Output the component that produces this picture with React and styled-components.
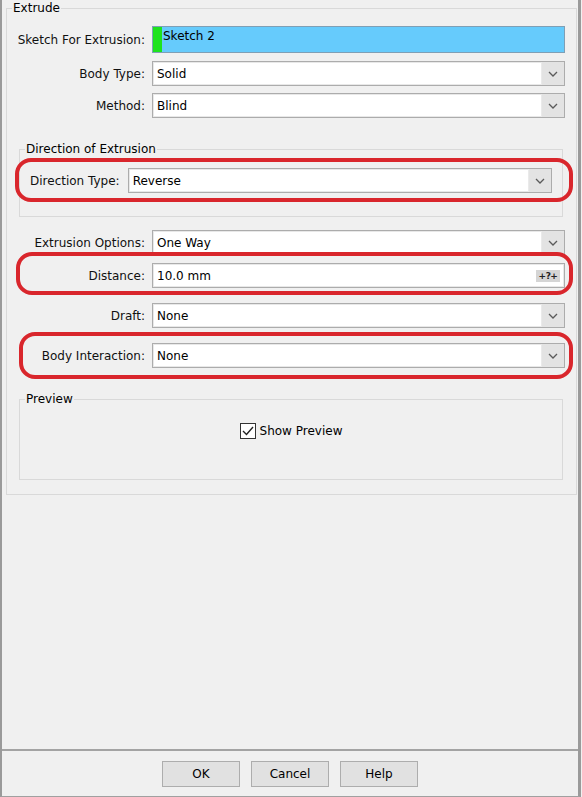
import React from "react";
import styled, { createGlobalStyle, css } from "styled-components";

const GlobalStyle = createGlobalStyle`
  html, body { margin: 0; padding: 0; background: #f0f0f0; }
  body {
    font-family: "DejaVu Sans", "Liberation Sans", sans-serif;
    font-size: 12px;
    color: #000;
  }
  * { box-sizing: border-box; }
`;

const Window = styled.div`
  width: 581px;
  height: 797px;
  display: flex;
  flex-direction: column;
  background: #f0f0f0;
  border-left: 2px solid #9a9a9a;
  border-right: 3px solid #9a9a9a;
  border-bottom: 1px solid #a0a0a0;
`;

const Body = styled.div`
  flex: 1;
  padding: 0 1px 0 4px;
`;

const Group = styled.fieldset`
  margin: ${(p) => p.$margin || "0"};
  padding: ${(p) => p.$padding};
  border: 1px solid #d9d9d9;
  min-width: 0;
`;

const Legend = styled.legend`
  padding: 0 1px;
  margin-left: -5px;
  line-height: 16px;
  font-size: 12px;
  color: #000;
`;

const Row = styled.div`
  position: relative;
  display: grid;
  grid-template-columns: ${(p) => (p.$inline ? "auto 1fr" : "128px 1fr")};
  column-gap: ${(p) => (p.$inline ? "8px" : "7px")};
  align-items: center;
  margin-top: ${(p) => p.$mt || 0}px;
  ${(p) =>
    p.$ring &&
    css`
      &::after {
        content: "";
        position: absolute;
        inset: ${p.$ring};
        border: 4px solid #d9262c;
        border-radius: 16px;
        pointer-events: none;
      }
    `}
`;

const Label = styled.label`
  text-align: right;
  white-space: nowrap;
  color: #111;
`;

const ComboBox = styled.div`
  height: 25px;
  display: flex;
  background: #fff;
  border: 1px solid #acacac;
  box-shadow: inset 0 0 0 1px #e8e8e8;
`;

const ComboText = styled.span`
  flex: 1;
  align-self: center;
  padding-left: 4px;
  white-space: nowrap;
`;

const ComboArrow = styled.span`
  width: 23px;
  display: flex;
  align-items: center;
  justify-content: center;
  background: #e3e3e3;
  border-left: 1px solid #eaeaea;
`;

const SketchField = styled.div`
  height: 27px;
  display: flex;
  align-items: flex-start;
  background: #66cbfc;
  border: 1px solid #7f9fb5;
`;

const GreenBar = styled.span`
  width: 9px;
  align-self: stretch;
  background: #1ee31e;
`;

const SketchText = styled.span`
  padding: 2px 0 0 1px;
  line-height: 15px;
`;

const TextBox = styled.div`
  height: 25px;
  display: flex;
  align-items: center;
  background: #fff;
  border: 1px solid #acacac;
  box-shadow: inset 0 0 0 1px #e8e8e8;
  padding-left: 4px;
`;

const SpinButton = styled.span`
  margin-left: auto;
  margin-right: 4px;
  width: 24px;
  height: 12px;
  background: #d5d5d5;
  font-size: 9px;
  font-weight: bold;
  line-height: 12px;
  text-align: center;
  letter-spacing: -0.5px;
  color: #222;
`;

const CheckRow = styled.div`
  display: flex;
  justify-content: center;
  align-items: center;
  gap: 4px;
`;

const CheckBox = styled.span`
  width: 16px;
  height: 16px;
  border: 1px solid #333;
  background: #fff;
  display: flex;
  align-items: center;
  justify-content: center;
`;

const Footer = styled.div`
  border-top: 2px solid #a3a3a3;
  padding: 10px 0 9px;
  display: flex;
  justify-content: center;
  gap: 11px;
`;

const Button = styled.button`
  width: 78px;
  height: 26px;
  background: #e1e1e1;
  border: 1px solid #adadad;
  font-family: inherit;
  font-size: 12px;
  color: #000;
  padding: 0;
`;

const Chevron = () => (
  <svg width="10" height="6" viewBox="0 0 10 6">
    <polyline points="1,1 5,5 9,1" fill="none" stroke="#5a5a5a" strokeWidth="1.3" />
  </svg>
);

const Combo = ({ value }) => (
  <ComboBox>
    <ComboText>{value}</ComboText>
    <ComboArrow>
      <Chevron />
    </ComboArrow>
  </ComboBox>
);

export default function App() {
  return (
    <>
      <GlobalStyle />
      <Window>
        <Body>
          <Group $padding="10px 11px 14px 10px">
            <Legend>Extrude</Legend>
            <Row>
              <Label>Sketch For Extrusion:</Label>
              <SketchField>
                <GreenBar />
                <SketchText>Sketch 2</SketchText>
              </SketchField>
            </Row>
            <Row $mt={8}>
              <Label>Body Type:</Label>
              <Combo value="Solid" />
            </Row>
            <Row $mt={7}>
              <Label>Method:</Label>
              <Combo value="Blind" />
            </Row>

            <Group $margin="23px 2px 0 2px" $padding="11px 10px 23px 10px">
              <Legend>Direction of Extrusion</Legend>
              <Row $inline $ring="-10px -21px -9px -15px">
                <Label>Direction Type:</Label>
                <Combo value="Reverse" />
              </Row>
            </Group>

            <Row $mt={13}>
              <Label>Extrusion Options:</Label>
              <Combo value="One Way" />
            </Row>
            <Row $mt={8} $ring="-11px -8px -7px -1px">
              <Label>Distance:</Label>
              <TextBox>
                10.0 mm
                <SpinButton>+?+</SpinButton>
              </TextBox>
            </Row>
            <Row $mt={15}>
              <Label>Draft:</Label>
              <Combo value="None" />
            </Row>
            <Row $mt={15} $ring="-11px -8px -11px 2px">
              <Label>Body Interaction:</Label>
              <Combo value="None" />
            </Row>

            <Group $margin="23px 2px 0 2px" $padding="16px 10px 40px 10px">
              <Legend>Preview</Legend>
              <CheckRow>
                <CheckBox>
                  <svg width="12" height="10" viewBox="0 0 12 10">
                    <polyline points="1,5 4.5,8.5 11,1" fill="none" stroke="#222" strokeWidth="1.4" />
                  </svg>
                </CheckBox>
                <span>Show Preview</span>
              </CheckRow>
            </Group>
          </Group>
        </Body>
        <Footer>
          <Button>OK</Button>
          <Button>Cancel</Button>
          <Button>Help</Button>
        </Footer>
      </Window>
    </>
  );
}
